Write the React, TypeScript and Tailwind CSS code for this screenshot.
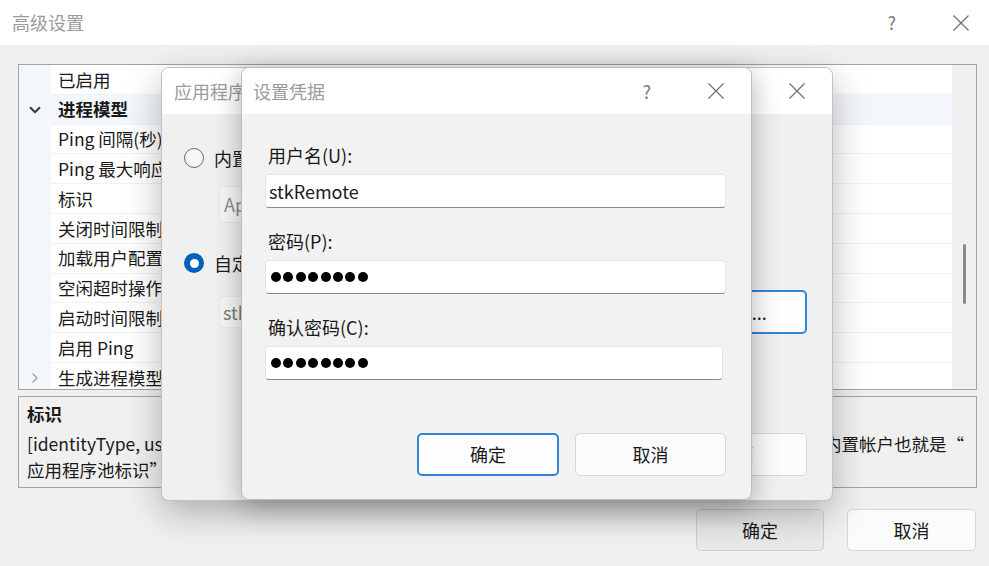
import { ChevronDown, ChevronRight } from 'lucide-react'

const ROWS: { label: string; kind?: 'open' | 'closed' }[] = [
  { label: '已启用' },
  { label: '进程模型', kind: 'open' },
  { label: 'Ping 间隔(秒)' },
  { label: 'Ping 最大响应时间(秒)' },
  { label: '标识' },
  { label: '关闭时间限制(秒)' },
  { label: '加载用户配置文件' },
  { label: '空闲超时操作' },
  { label: '启动时间限制(秒)' },
  { label: '启用 Ping' },
  { label: '生成进程模型事件日志条目', kind: 'closed' },
]

function CloseIcon() {
  return (
    <svg width="18" height="18" viewBox="0 0 18 18" className="shrink-0">
      <path d="M1.5 1.5 L16.5 16.5 M16.5 1.5 L1.5 16.5" stroke="#6f6f6f" strokeWidth="1.2" fill="none" />
    </svg>
  )
}

function Radio({ checked }: { checked?: boolean }) {
  return checked ? (
    <span className="w-[20px] h-[20px] rounded-full bg-[#005fb8] flex items-center justify-center shrink-0">
      <span className="w-[9px] h-[9px] rounded-full bg-white" />
    </span>
  ) : (
    <span className="w-[20px] h-[20px] rounded-full border-[1.5px] border-[#6a6a6a] bg-[#f6f6f6] shrink-0" />
  )
}

function Dots() {
  return (
    <div className="flex items-center gap-[2.4px] pl-[5px]">
      {Array.from({ length: 8 }).map((_, i) => (
        <span key={i} className="w-[10px] h-[10px] rounded-full bg-black" />
      ))}
    </div>
  )
}

function Btn({ label, focus, className }: { label: string; focus?: boolean; className?: string }) {
  return (
    <div
      className={
        'h-[43px] rounded-[5px] flex items-center justify-center text-[18px] text-[#1a1a1a] ' +
        (focus ? 'border-2 border-[#3284d8] bg-[#fdfdfd] ' : 'border border-[#d6d6d6] bg-[#fcfcfc] ') +
        (className ?? '')
      }
    >
      {label}
    </div>
  )
}

export default function App() {
  return (
    <div className="relative w-[989px] h-[566px] overflow-hidden bg-[#f0f0f0] font-['Noto_Sans_CJK_SC','Noto_Sans',sans-serif] text-[#1a1a1a]">
      {/* 高级设置 main window */}
      <div className="flex flex-col h-full">
        <div className="h-[45px] bg-white flex items-center pl-[12px] pr-[19px] shrink-0">
          <span className="text-[18px] text-[#9b9b9b] flex-1">高级设置</span>
          <span className="text-[18px] text-[#7a7a7a] mr-[56px]">?</span>
          <CloseIcon />
        </div>
        <div className="flex-1 flex flex-col px-[12px] pt-[19px] pl-[18px]">
          {/* property grid */}
          <div className="h-[326px] border border-[#a3a3a3] flex bg-white overflow-hidden">
            <div className="flex-1 flex flex-col">
              {ROWS.map((r, i) => (
                <div
                  key={i}
                  className={
                    'h-[29.8px] shrink-0 flex items-center ' + (r.kind === 'open' ? 'bg-[#f3f6fb]' : '')
                  }
                >
                  <div className="w-[32px] h-full bg-[#f3f6fb] flex items-center justify-center">
                    {r.kind === 'open' && <ChevronDown size={18} strokeWidth={2.4} color="#333" />}
                    {r.kind === 'closed' && <ChevronRight size={16} strokeWidth={1.8} color="#9a9a9a" />}
                  </div>
                  <div
                    className={
                      'flex-1 h-full flex items-center pl-[7px] text-[17.5px] leading-none border-b border-[#edf1f8] ' +
                      (r.kind === 'open' ? 'font-bold' : '')
                    }
                  >
                    {r.label}
                  </div>
                </div>
              ))}
            </div>
            <div className="w-[24px] bg-[#f0f0f0] relative">
              <div className="absolute left-[11px] top-[179px] w-[3px] h-[60px] rounded-full bg-[#8a8a8a]" />
            </div>
          </div>

          {/* description */}
          <div className="mt-[6px] h-[92px] border border-[#a3a3a3] px-[8px] pt-[4px] text-[17.5px]">
            <div className="font-bold leading-[26px] mb-[4px]">标识</div>
            <div className="leading-[26px] flex justify-between whitespace-nowrap pr-[4px]">
              <span>[identityType, userName, password] 将应用程序池配置为以</span>
              <span>内置帐户也就是“</span>
            </div>
            <div className="leading-[26px] whitespace-nowrap">
              应用程序池标识”(推荐)、网络服务、本地系统、本地服务运行，或以特定用户标识运行。
            </div>
          </div>

          <div className="mt-[21px] flex justify-end gap-[23px] pr-[1px]">
            <div className="w-[128px] h-[42px] rounded-[5px] border border-[#cfcfcf] bg-[#e9e9e9] flex items-center justify-center text-[18px]">
              确定
            </div>
            <div className="w-[129px] h-[42px] rounded-[5px] border border-[#d6d6d6] bg-[#fbfbfb] flex items-center justify-center text-[18px]">
              取消
            </div>
          </div>
        </div>
      </div>

      {/* 应用程序池标识 dialog */}
      <div className="absolute left-[161px] top-[67px] w-[672px] h-[434px] rounded-[8px] border border-[#c2c2c2] bg-[#f0f0f0] overflow-hidden flex flex-col shadow-[0_12px_36px_rgba(0,0,0,0.28)]">
        <div className="h-[46px] bg-white flex items-center pl-[12px] pr-[26px] shrink-0">
          <span className="text-[18px] text-[#9b9b9b] flex-1">应用程序池标识</span>
          <CloseIcon />
        </div>
        <div className="flex flex-col pl-[22px] pr-[25px] pt-[32px]">
          <div className="h-[24px] flex items-center gap-[10px] text-[18px]">
            <Radio />
            <span>内置帐户(B):</span>
          </div>
          <div className="mt-[16px] ml-[35px] w-[470px] h-[37px] rounded-[4px] bg-[#f6f6f6] border border-[#e6e6e6] flex items-center px-[4px] text-[18px] text-[#8a8a8a]">
            ApplicationPoolIdentity
          </div>
          <div className="mt-[28px] h-[24px] flex items-center gap-[10px] text-[18px]">
            <Radio checked />
            <span>自定义帐户(C):</span>
          </div>
          <div className="mt-[15px] ml-[35px] h-[44px] flex items-center gap-[12px]">
            <div className="flex-1 h-[32px] rounded-[4px] bg-[#f6f6f6] border border-[#e6e6e6] flex items-center px-[3px] text-[18px] text-[#7a7a7a]">
              stkRemote
            </div>
            <Btn label="设置(E)..." focus className="w-[154px] h-[44px]" />
          </div>
          <div className="mt-[99px] flex justify-end gap-[16px]">
            <Btn label="确定" className="w-[142px] h-[42px]" />
            <Btn label="取消" className="w-[143px] h-[42px]" />
          </div>
        </div>
      </div>

      {/* 设置凭据 dialog */}
      <div className="absolute left-[241px] top-[67px] w-[511px] h-[433px] rounded-[8px] border border-[#bdbdbd] bg-[#f2f2f2] overflow-hidden flex flex-col shadow-[0_6px_28px_rgba(0,0,0,0.3)]">
        <div className="h-[46px] bg-white flex items-center pl-[11px] pr-[26px] shrink-0">
          <span className="text-[18px] text-[#9b9b9b] flex-1">设置凭据</span>
          <span className="text-[18px] text-[#7a7a7a] mr-[56px]">?</span>
          <CloseIcon />
        </div>
        <div className="flex flex-col px-[23px] pr-[25px] pt-[28px] text-[18px]">
          <div className="h-[26px] leading-[26px] pl-[3px]">用户名(U):</div>
          <div className="mt-[6px] h-[34px] rounded-[4px] bg-white border border-[#e4e4e4] border-b-[#8a8a8a] flex items-center px-[3px]">
            stkRemote
          </div>
          <div className="mt-[20px] h-[26px] leading-[26px] pl-[3px]">密码(P):</div>
          <div className="mt-[6px] h-[34px] rounded-[4px] bg-white border border-[#e4e4e4] border-b-[#8a8a8a] flex items-center">
            <Dots />
          </div>
          <div className="mt-[20px] h-[26px] leading-[26px] pl-[3px]">确认密码(C):</div>
          <div className="mt-[6px] mr-[3px] h-[34px] rounded-[4px] bg-white border border-[#e4e4e4] border-b-[#8a8a8a] flex items-center">
            <Dots />
          </div>
          <div className="mt-[53px] flex justify-end gap-[16px]">
            <Btn label="确定" focus className="w-[142px]" />
            <Btn label="取消" className="w-[151px]" />
          </div>
        </div>
      </div>
    </div>
  )
}
